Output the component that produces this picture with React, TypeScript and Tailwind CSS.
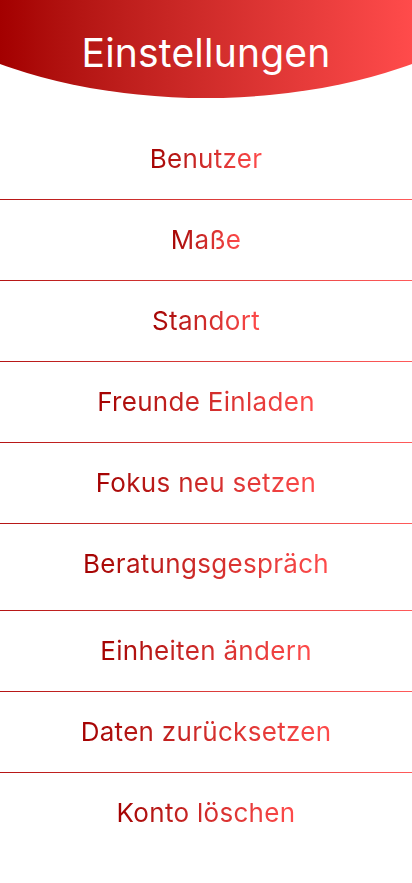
import React from "react";

const items: { label: string; extra?: boolean }[] = [
  { label: "Benutzer" },
  { label: "Maße" },
  { label: "Standort" },
  { label: "Freunde Einladen" },
  { label: "Fokus neu setzen" },
  { label: "Beratungsgespräch", extra: true },
  { label: "Einheiten ändern" },
  { label: "Daten zurücksetzen" },
  { label: "Konto löschen" },
];

export default function App() {
  return (
    <div
      className="w-[412px] min-h-[883px] bg-white"
      style={{ fontFamily: "Inter, 'Noto Sans', sans-serif" }}
    >
      <header className="h-[98px] bg-gradient-to-r from-[#a30000] to-[#ff4b4b] [clip-path:ellipse(350px_178px_at_50%_-80px)] flex justify-center pt-[29px]">
        <h1 className="text-white text-[39px] leading-[48px] font-normal tracking-[0.2px]">
          Einstellungen
        </h1>
      </header>
      <ul className="pt-[21px]">
        {items.map((it, i) => (
          <li key={it.label}>
            <div
              className={
                it.extra
                  ? "h-[86px] pb-[6px] flex items-center justify-center"
                  : "h-[80px] flex items-center justify-center"
              }
            >
              <span className="inline-block text-[26px] leading-[32px] tracking-[0.3px] bg-gradient-to-r from-[#a30000] to-[#ff4b4b] bg-clip-text text-transparent">
                {it.label}
              </span>
            </div>
            {i < items.length - 1 && (
              <div className="h-px bg-gradient-to-r from-[#b51414] to-[#ff5a5a]" />
            )}
          </li>
        ))}
      </ul>
    </div>
  );
}
